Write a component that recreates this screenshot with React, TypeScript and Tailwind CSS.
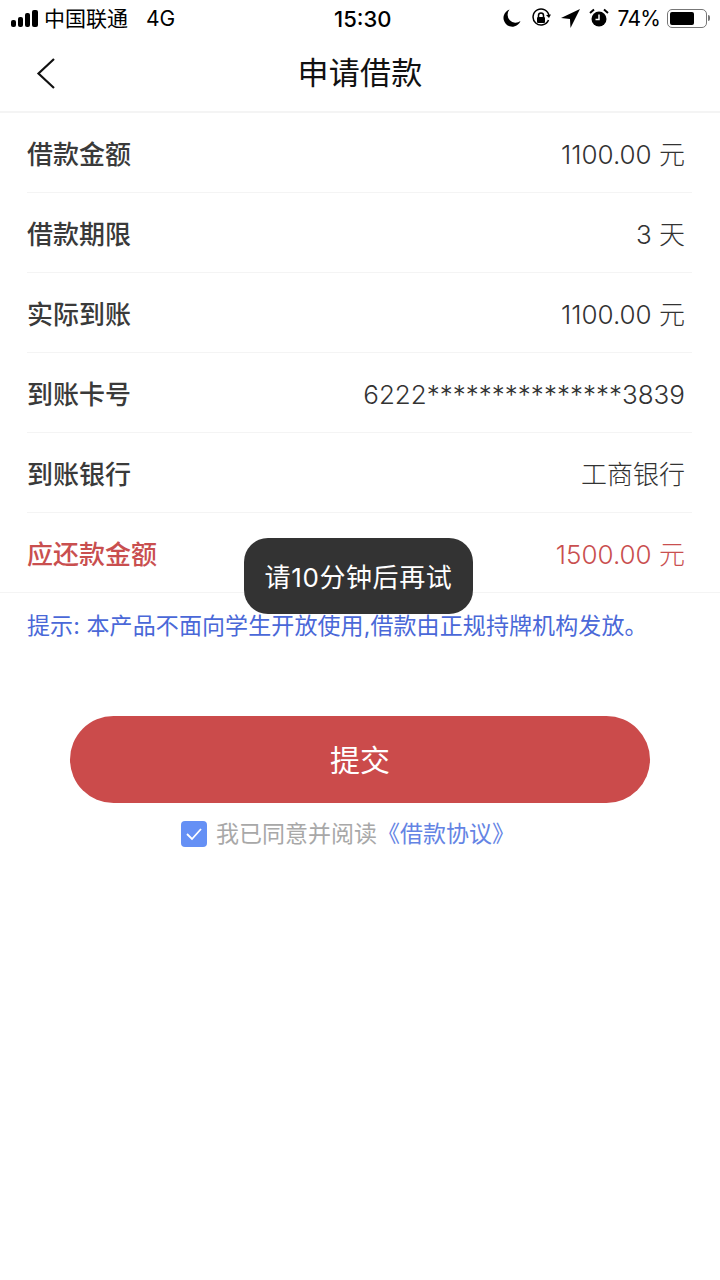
const rows = [
  { label: "借款金额", value: "1100.00 元" },
  { label: "借款期限", value: "3 天" },
  { label: "实际到账", value: "1100.00 元" },
  { label: "到账卡号", value: "6222***************3839" },
  { label: "到账银行", value: "工商银行" },
]

function StatusBar() {
  return (
    <div className="relative flex h-[36px] items-center justify-between pl-[11px] pr-[10px] text-[21px] leading-none text-black">
      <div className="flex items-center">
        <div className="flex items-end gap-[2px]">
          <span className="h-[7px] w-[5px] rounded-[2px] bg-black" />
          <span className="h-[10px] w-[5px] rounded-[2px] bg-black" />
          <span className="h-[14px] w-[5px] rounded-[2px] bg-black" />
          <span className="h-[17px] w-[6px] rounded-[2px] bg-black" />
        </div>
        <span className="ml-[6px]">中国联通</span>
        <span className="ml-[18px]">4G</span>
      </div>
      <span className="absolute left-[334px] top-[8px] text-[22px] font-medium">15:30</span>
      <div className="flex items-center">
        <svg width="18" height="18" viewBox="0 0 18 18" className="mr-[10px]">
          <path d="M6.500 0.500a8.800 8.800 0 1 0 11 11.500A8 8 0 0 1 6.500 0.500z" fill="#000" />
        </svg>
        <svg width="20" height="20" viewBox="0 0 20 20" className="mr-[10px]">
          <path d="M17.500 12A8 8 0 1 1 18 8" fill="none" stroke="#000" strokeWidth="1.500" />
          <path d="M15 7l3 3 2-3.500z" fill="#000" />
          <rect x="6" y="9" width="8" height="6" rx="1" fill="#000" />
          <path d="M7.500 9V7.500a2.500 2.500 0 0 1 5 0V9" fill="none" stroke="#000" strokeWidth="1.500" />
        </svg>
        <svg width="19" height="19" viewBox="0 0 18 18" className="mr-[9px]">
          <path d="M18 0L0 8.500l8.500 1 .5 8.500z" fill="#000" />
        </svg>
        <svg width="20" height="20" viewBox="0 0 20 20" className="mr-[9px]">
          <circle cx="10" cy="11" r="7.500" fill="#000" />
          <path d="M10 6.500V11.500H6.500" fill="none" stroke="#fff" strokeWidth="1.500" />
          <path d="M1 5l4-3.500M19 5l-4-3.500" stroke="#000" strokeWidth="2" />
        </svg>
        <span className="tracking-[-0.8px]">74%</span>
        <div className="ml-[7px] flex h-[19px] w-[40px] items-center rounded-[5px] border-[1.5px] border-[#777] p-[2px]">
          <div className="h-full w-[24px] rounded-[2px] bg-black" />
        </div>
        <span className="ml-[1px] h-[6px] w-[2px] rounded-r-[2px] bg-[#777]" />
      </div>
    </div>
  )
}

export default function App() {
  return (
    <div className="relative h-[1280px] w-[720px] overflow-hidden bg-white font-['Inter','Noto_Sans_CJK_SC',sans-serif]">
      <StatusBar />

      <header className="relative flex h-[77px] items-center justify-center border-b-2 border-[#f4f4f4]">
        <svg width="20" height="32" viewBox="0 0 20 32" className="absolute left-[36px] top-[21px]" fill="none">
          <path d="M18 2L2.500 16.500 18 31" stroke="#111" strokeWidth="2.200" />
        </svg>
        <h1 className="text-[31px] font-normal tracking-[0.3px] text-[#111]">申请借款</h1>
      </header>

      <div className="pl-[27px] pr-[28px]">
        {rows.map((r) => (
          <div key={r.label} className="flex h-[80px] items-center justify-between border-b border-[#f4f4f4] pr-[7px] pt-[4px] text-[26px]">
            <span className="font-medium text-[#3a3a3a]">{r.label}</span>
            <span className="font-light text-[#333]">{r.value}</span>
          </div>
        ))}
      </div>

      <div className="flex h-[80px] items-center justify-between border-b border-[#f4f4f4] pl-[27px] pr-[35px] pt-[4px] text-[26px] text-[#c94f4f]">
        <span className="font-medium">应还款金额</span>
        <span className="font-light">1500.00 元</span>
      </div>

      <p className="mt-[17px] pl-[27px] text-[23px] leading-[32px] tracking-[0.1px] text-[#4a68d8]">
        提示: 本产品不面向学生开放使用,借款由正规持牌机构发放。
      </p>

      <button className="ml-[70px] mt-[74px] flex h-[87px] w-[580px] items-center justify-center rounded-full bg-[#cb4b4b] pt-[2px] text-[30px] text-white">
        提交
      </button>

      <div className="ml-[181px] mt-[18px] flex items-center text-[23px] leading-[26px]">
        <div className="flex h-[26px] w-[26px] items-center justify-center rounded-[4px] bg-[#6590f5]">
          <svg width="18" height="14" viewBox="0 0 18 14">
            <path d="M2 7l5 5 9-10" fill="none" stroke="#fff" strokeWidth="1.800" />
          </svg>
        </div>
        <span className="ml-[9px] text-[#a8a8a8]">我已同意并阅读</span>
        <span className="text-[#6484e4]">《借款协议》</span>
      </div>

      {/* toast */}
      <div className="absolute left-[244px] top-[538px] flex h-[76px] w-[229px] items-center justify-center rounded-[24px] bg-[#333333] pt-[2px] text-[26px] tracking-[0.6px] text-white">
        请10分钟后再试
      </div>
    </div>
  )
}
